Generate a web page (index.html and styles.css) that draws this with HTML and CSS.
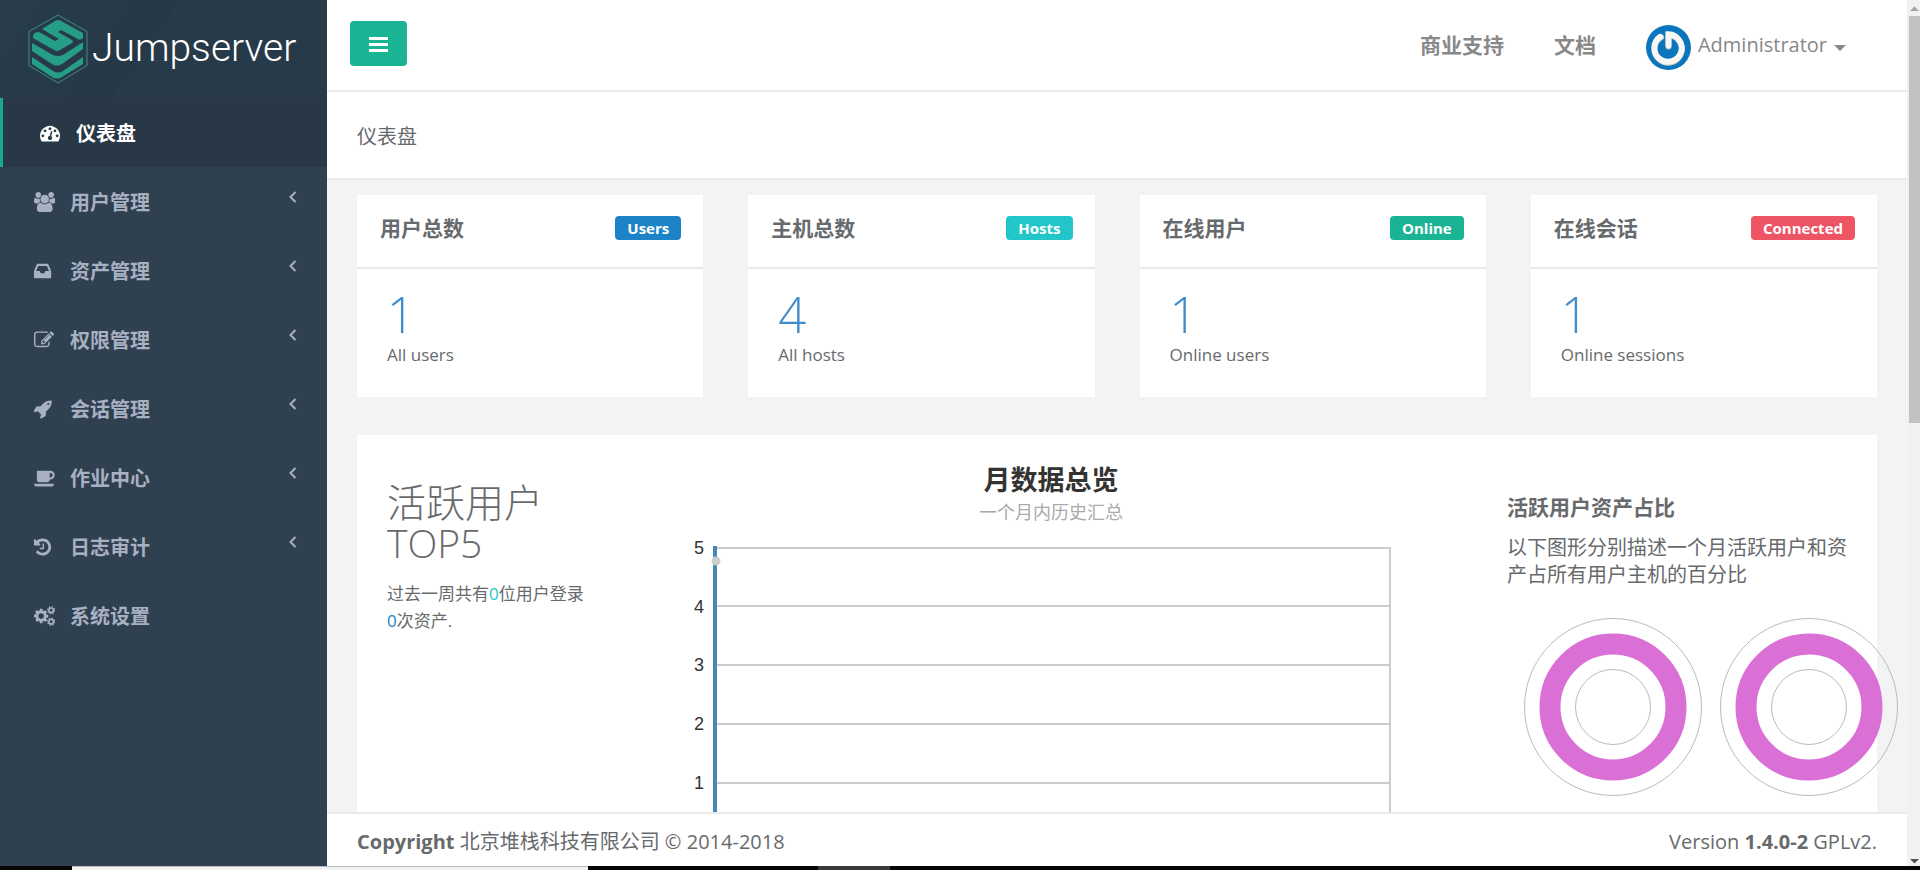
FILE: index.html
```html
<!DOCTYPE html>
<html lang="zh-CN">
<head>
<meta charset="utf-8">
<title>Jumpserver</title>
<link rel="stylesheet" href="styles.css">
</head>
<body>
<div class="app">
  <nav class="sidebar">
    <div class="brand">
      <svg class="brand-mark" viewBox="0 0 60 70" aria-hidden="true">
        <path class="hex" d="M30 1 59 17.500V51.500L30 69 1 51.500V17.500Z"/>
        <path d="M14 15 27 7Q30 5 33 7L55 19V24Q52 27 48 24L33 16 30 18 44 26Q46 28 44 29L32 36Q29 38 26 36L5 24V21Q8 16 13 19L27 27 31 25Z"/>
        <path d="M4 29 25 41Q30 43 35 41L55 28V35L34 50Q29 53 24 50L4 37Z"/>
        <path d="M4 43 25 57Q30 60 35 57L55 43V50L34 63Q29 66 24 63L4 50Z"/>
      </svg>
      <span class="brand-name">Jumpserver</span>
    </div>
    <ul class="menu">
      <li class="active"><a href="#"><span class="icon"><svg viewBox="0 0 1792 1792"><path d="M384 1152q0-53-37.500-90.500t-90.500-37.500-90.500 37.500-37.500 90.500 37.500 90.500 90.500 37.500 90.500-37.500 37.500-90.500zm192-448q0-53-37.500-90.500t-90.500-37.500-90.500 37.500-37.500 90.500 37.500 90.500 90.500 37.500 90.500-37.500 37.500-90.500zm428 481l101-382q6-26-7.500-48.500t-38.500-29.500-48 6.500-30 39.500l-101 382q-60 5-107 43.500t-63 98.500q-20 77 20 146t117 89 146-20 89-117q16-60-6-117t-72-91zm660-33q0-53-37.500-90.500t-90.500-37.500-90.500 37.500-37.500 90.500 37.500 90.500 90.500 37.500 90.500-37.500 37.500-90.500zm-640-640q0-53-37.500-90.500t-90.500-37.500-90.500 37.500-37.500 90.500 37.500 90.500 90.500 37.500 90.500-37.500 37.500-90.500zm448 192q0-53-37.500-90.500t-90.500-37.500-90.500 37.500-37.500 90.500 37.500 90.500 90.500 37.500 90.500-37.500 37.500-90.500zm320 448q0 261-141 483-19 29-54 29h-1402q-35 0-54-29-141-221-141-483 0-182 71-348t191-286 286-191 348-71 348 71 286 191 191 286 71 348z"/></svg></span><span>仪表盘</span></a></li>
      <li><a href="#"><span class="icon"><svg viewBox="-64 0 1920 1792"><path d="M529 896q-162 5-265 128h-134q-82 0-138-40.500t-56-118.500q0-353 124-353 6 0 43.500 21t97.500 42.500 119 21.500q67 0 133-23-5 37-5 66 0 139 81 256zm1071 637q0 120-73 189.500t-194 69.500h-874q-121 0-194-69.500t-73-189.500q0-53 3.500-103.500t14-109 26.500-108.500 43-97.500 62-81 85.500-53.500 111.500-20q10 0 43 21.500t73 48 107 48 135 21.500 135-21.500 107-48 73-48 43-21.500q61 0 111.500 20t85.500 53.500 62 81 43 97.500 26.500 108.500 14 109 3.500 103.500zm-1024-1277q0 106-75 181t-181 75-181-75-75-181 75-181 181-75 181 75 75 181zm704 384q0 159-112.500 271.500t-271.500 112.500-271.500-112.500-112.500-271.500 112.500-271.500 271.500-112.500 271.500 112.500 112.500 271.500zm576 225q0 78-56 118.500t-138 40.500h-134q-103-123-265-128 81-117 81-256 0-29-5-66 66 23 133 23 59 0 119-21.500t97.500-42.500 43.500-21q124 0 124 353zm-128-609q0 106-75 181t-181 75-181-75-75-181 75-181 181-75 181 75 75 181z"/></svg></span><span>用户管理</span><svg class="angle" viewBox="0 0 8 12"><path d="M6.500 1 1.500 6l5 5"/></svg></a></li>
      <li><a href="#"><span class="icon"><svg viewBox="0 0 1792 1792"><path fill-rule="evenodd" d="M300 256H1236Q1270 256 1284 288L1520 860Q1536 900 1536 940V1480Q1536 1536 1480 1536H56Q0 1536 0 1480V940Q0 900 16 860L252 288Q266 256 300 256ZM378 448 196 896H512L608 1088H928L1024 896H1340L1158 448Z"/></svg></span><span>资产管理</span><svg class="angle" viewBox="0 0 8 12"><path d="M6.500 1 1.500 6l5 5"/></svg></a></li>
      <li><a href="#"><span class="icon"><svg viewBox="0 0 1792 1792"><path d="M888 1184l116-116-152-152-116 116v56h96v96h56zm440-720q-16-16-33 1l-350 350q-17 17-1 33t33-1l350-350q17-17 1-33zm80 594v190q0 119-84.500 203.500t-203.500 84.500h-832q-119 0-203.500-84.500t-84.500-203.500v-832q0-119 84.500-203.500t203.500-84.500h832q63 0 117 25 15 7 18 23 3 17-9 29l-49 49q-14 14-32 8-23-6-45-6h-832q-66 0-113 47t-47 113v832q0 66 47 113t113 47h832q66 0 113-47t47-113v-126q0-13 9-22l64-64q15-15 35-7t20 29zm-96-738l288 288-672 672h-288v-288zm444 132l-92 92-288-288 92-92q28-28 68-28t68 28l152 152q28 28 28 68t-28 68z"/></svg></span><span>权限管理</span><svg class="angle" viewBox="0 0 8 12"><path d="M6.500 1 1.500 6l5 5"/></svg></a></li>
      <li><a href="#"><span class="icon"><svg viewBox="64 0 1792 1792"><path d="M1440 448q0-40-28-68t-68-28-68 28-28 68 28 68 68 28 68-28 28-68zm224-288q0 249-75.500 430.500t-253.500 360.500q-81 80-195 176l-20 379q-2 16-16 26l-384 224q-7 4-16 4-12 0-23-9l-64-64q-13-14-8-32l85-276-281-281-276 85q-3 1-9 1-14 0-23-9l-64-64q-17-19-5-39l224-384q10-14 26-16l379-20q96-114 176-195 188-187 358-258t431-71q14 0 24 9.500t10 22.500z"/></svg></span><span>会话管理</span><svg class="angle" viewBox="0 0 8 12"><path d="M6.500 1 1.500 6l5 5"/></svg></a></li>
      <li><a href="#"><span class="icon"><svg viewBox="0 0 1920 1792"><path d="M1664 640q0-80-56-136t-136-56h-64v384h64q80 0 136-56t56-136zm-1664 768h1792q0 106-75 181t-181 75h-1280q-106 0-181-75t-75-181zm1856-768q0 159-112.500 271.500t-271.500 112.500h-64v32q0 92-66 158t-158 66h-704q-92 0-158-66t-66-158v-736q0-26 19-45t45-19h1152q159 0 271.500 112.500t112.500 271.500z"/></svg></span><span>作业中心</span><svg class="angle" viewBox="0 0 8 12"><path d="M6.500 1 1.500 6l5 5"/></svg></a></li>
      <li><a href="#"><span class="icon"><svg viewBox="128 0 1792 1792"><path d="M1664 896q0 156-61 298t-164 245-245 164-298 61q-172 0-327-72.500t-264-204.500q-7-10-6.500-22.500t8.500-20.500l137-138q10-9 25-9 16 2 23 12 73 95 179 147t225 52q104 0 198.500-40.500t163.500-109.500 109.500-163.500 40.500-198.500-40.500-198.500-109.500-163.500-163.500-109.500-198.500-40.500q-98 0-188 35.500t-160 101.500l137 138q31 30 14 69-17 40-59 40h-448q-26 0-45-19t-19-45v-448q0-42 40-59 39-17 69 14l130 129q107-101 244.500-156.500t284.500-55.500q156 0 298 61t245 164 164 245 61 298zm-640-288v448q0 14-9 23t-23 9h-320q-14 0-23-9t-9-23v-64q0-14 9-23t23-9h224v-352q0-14 9-23t23-9h64q14 0 23 9t9 23z"/></svg></span><span>日志审计</span><svg class="angle" viewBox="0 0 8 12"><path d="M6.500 1 1.500 6l5 5"/></svg></a></li>
      <li><a href="#"><span class="icon"><svg viewBox="0 0 1920 1792"><path d="M896 896q0-106-75-181t-181-75-181 75-75 181 75 181 181 75 181-75 75-181zm384-91v185q0 10-7 19.500t-16 10.500l-155 24q-11 35-32 76 34 48 90 115 7 11 7 20 0 12-7 19-23 30-82.500 89.500t-78.500 59.500q-11 0-21-7l-115-90q-37 19-77 31-11 108-23 155-7 24-30 24h-186q-11 0-20-7.500t-10-17.500l-23-153q-34-10-75-31l-118 89q-7 7-20 7-11 0-21-8-144-133-144-160 0-9 7-19 10-14 41-53t47-61q-23-44-35-82l-152-24q-10-1-17-9.500t-7-19.500v-185q0-10 7-19.500t16-10.500l155-24q11-35 32-76-34-48-90-115-7-11-7-20 0-12 7-20 22-30 82-89t79-59q11 0 21 7l115 90q34-18 77-32 11-108 23-154 7-24 30-24h186q11 0 20 7.500t10 17.500l23 153q34 10 75 31l118-89q8-7 20-7 11 0 21 8 144 133 144 160 0 8-7 19-12 16-42 54t-45 60q23 48 34 82l152 23q10 2 17 10.500t7 19.500z"/><g class="gear"><circle cx="1536" cy="384" r="205"/><circle class="teeth" cx="1536" cy="384" r="320"/><circle cx="1536" cy="1408" r="205"/><circle class="teeth" cx="1536" cy="1408" r="320"/></g></svg></span><span>系统设置</span></a></li>
    </ul>
  </nav>

  <div class="main">
    <header class="topbar">
      <button class="toggle" type="button" aria-label="菜单"><svg viewBox="0 0 19 16"><path d="M0 0h19v3H0zM0 6h19v3H0zM0 12h19v3H0z"/></svg></button>
      <div class="top-links">
        <a class="support" href="#">商业支持</a>
        <a class="docs" href="#">文档</a>
        <a class="user" href="#">
          <svg class="avatar" viewBox="0 0 46 46" aria-hidden="true"><circle class="disc" cx="23" cy="23" r="23"/><g class="shade"><path d="M15.500 12.500A14 14 0 1 0 23 10.500V22"/></g><path d="M14.500 12A14 14 0 1 0 23 9.500V21"/></svg>
          <span>Administrator</span><i class="caret"></i>
        </a>
      </div>
    </header>
    <div class="heading">仪表盘</div>

    <main class="content">
      <section class="cards">
        <article class="card"><header><h5>用户总数</h5><span class="label blue">Users</span></header><div class="card-body"><h1><a href="#">1</a></h1><small>All users</small></div></article>
        <article class="card"><header><h5>主机总数</h5><span class="label cyan">Hosts</span></header><div class="card-body"><h1><a href="#">4</a></h1><small>All hosts</small></div></article>
        <article class="card"><header><h5>在线用户</h5><span class="label green">Online</span></header><div class="card-body"><h1><a href="#">1</a></h1><small>Online users</small></div></article>
        <article class="card"><header><h5>在线会话</h5><span class="label red">Connected</span></header><div class="card-body"><h1><a href="#">1</a></h1><small>Online sessions</small></div></article>
      </section>

      <section class="panel">
        <div class="top5">
          <h2>活跃用户TOP5</h2>
          <p>过去一周共有<span class="c-cyan">0</span>位用户登录<span class="c-blue">0</span>次资产.</p>
        </div>
        <div class="chart">
          <h3>月数据总览</h3>
          <p>一个月内历史汇总</p>
          <svg class="plot" viewBox="0 0 720 330" role="img" aria-label="月数据总览">
            <g class="grid"><path d="M34 13H709M34 71H709M34 130H709M34 189H709M34 248H709M34 307H709M708 13V307"/></g>
            <path class="axis" d="M33 11V309"/>
            <circle class="dot" cx="34" cy="26" r="4.500"/>
            <g class="ticks"><text x="22" y="19">5</text><text x="22" y="78">4</text><text x="22" y="136">3</text><text x="22" y="195">2</text><text x="22" y="254">1</text></g>
          </svg>
        </div>
        <div class="share">
          <h4>活跃用户资产占比</h4>
          <p>以下图形分别描述一个月活跃用户和资产占所有用户主机的百分比</p>
          <div class="rings">
            <svg viewBox="0 0 180 180"><circle cx="90" cy="90" r="88.500"/><circle class="band" cx="90" cy="90" r="63"/><circle cx="90" cy="90" r="37.500"/></svg>
            <svg viewBox="0 0 180 180"><circle cx="90" cy="90" r="88.500"/><circle class="band" cx="90" cy="90" r="63"/><circle cx="90" cy="90" r="37.500"/></svg>
          </div>
        </div>
      </section>
    </main>

    <footer class="footer">
      <div><strong>Copyright</strong> 北京堆栈科技有限公司 © 2014-2018</div>
      <div>Version <strong>1.4.0-2</strong> GPLv2.</div>
    </footer>
  </div>

  <div class="scroll" aria-hidden="true">
    <svg viewBox="0 0 11 16"><path d="M1 11h9L5.500 6.500z"/></svg>
    <div class="thumb"></div>
    <svg class="down" viewBox="0 0 11 10"><path d="M1 3h9L5.500 7.500z"/></svg>
  </div>
</div>
<div class="taskbar" aria-hidden="true"><i class="task-search"></i><i class="task-open"></i></div>
</body>
</html>
```
FILE: styles.css
```css
* { box-sizing: border-box; }
body {
  margin: 0;
  height: 100vh;
  display: flex;
  flex-direction: column;
  overflow: hidden;
  background: #2f4050;
  color: #676a6c;
  font-family: "Open Sans", "Noto Sans CJK SC", sans-serif;
  font-size: 20px;
  line-height: 28px;
}
a { color: inherit; text-decoration: none; }
h1, h2, h3, h4, h5, p, ul { margin: 0; padding: 0; }
svg { display: block; }

.app { flex: 1; min-height: 0; display: flex; }

.sidebar { flex: 0 0 327px; background: #2f4050; color: #a7b1c2; }
.brand {
  height: 98px;
  padding: 14px 0 14px 28px;
  display: flex;
  gap: 4px;
  background: linear-gradient(125deg, #283c4c 0, #263847 45%, #273a4a 46%, #263a4a 100%);
}
.brand-mark { width: 60px; height: 70px; fill: #259e85; }
.brand-mark .hex { fill: none; stroke: #3c8f86; }
.brand-name { color: #fff; font-family: Roboto, sans-serif; font-size: 39px; font-weight: 300; line-height: 68px; }

.menu { list-style: none; }
.menu a {
  height: 69px;
  padding: 2px 30px 0 34px;
  display: flex;
  align-items: center;
  font-weight: 700;
}
.menu .active a { padding-left: 37px; border-left: 3px solid #19aa8d; background: #293846; color: #fff; }
.icon { flex: 0 0 36px; padding-bottom: 2px; }
.icon svg { height: 20px; fill: currentColor; }
.gear { fill: none; stroke: currentColor; stroke-width: 150; }
.gear .teeth { stroke-width: 110; stroke-dasharray: 126 125; }
.angle { width: 8px; height: 12px; margin: 0 0 11px auto; fill: none; stroke: currentColor; stroke-width: 2; }

.main { flex: 1; min-width: 0; display: flex; flex-direction: column; background: #f3f3f4; }
.topbar {
  flex: none;
  height: 92px;
  padding: 0 61px 0 23px;
  display: flex;
  align-items: center;
  justify-content: space-between;
  background: #fff;
  border-bottom: 2px solid #e7eaec;
}
.toggle {
  width: 57px;
  height: 45px;
  margin-bottom: 4px;
  padding: 3px 19px 0;
  border: 0;
  border-radius: 4px;
  background: #1ab394;
}
.toggle svg { width: 19px; height: 16px; fill: #fff; }
.top-links { display: flex; align-items: center; color: #888; }
.support, .docs { font-size: 21px; font-weight: 700; margin-right: 50px; }
.user { display: flex; align-items: center; gap: 7px; }
.avatar { width: 45px; height: 45px; margin-top: 4px; fill: none; stroke: #f7f7f5; stroke-width: 6; stroke-linecap: round; }
.avatar .disc { fill: #0a76bd; stroke: none; }
.avatar .shade { stroke: #ccc9c4; }
.caret { margin-top: 6px; border: 6px solid transparent; border-top-color: #888; border-bottom: 0; }

.heading {
  flex: none;
  height: 88px;
  padding: 31px 30px;
  background: #fff;
  border-bottom: 2px solid #e7eaec;
}

.content { flex: 1; min-height: 0; overflow: hidden; padding: 15px 30px 0; }
.cards { display: grid; grid-template-columns: repeat(4, 1fr); gap: 45px; margin-bottom: 38px; }
.card { background: #fff; }
.card > header {
  height: 74px;
  padding: 21px 22px 0 23px;
  display: flex;
  align-items: flex-start;
  justify-content: space-between;
  border-bottom: 2px solid #e7eaec;
}
.card h5 { font-size: 21px; line-height: 24px; }
.label { padding: 0 12px; border-radius: 4px; color: #fff; font-size: 15px; font-weight: 700; line-height: 24px; }
.blue { background: #1c84c6; }
.cyan { background: #23c6c8; }
.green { background: #1ab394; }
.red { background: #ed5565; }
.card-body { height: 128px; padding: 20px 30px; }
.card-body h1 { color: #428bca; font-size: 49px; font-weight: 300; line-height: 50px; }
.card-body small { display: block; font-size: 17px; line-height: 32px; }

.panel { height: 520px; padding: 26px 30px; display: flex; background: #fff; }
.top5 { flex: 0 0 200px; margin-right: 95px; padding-top: 20px; }
.top5 h2 { font-size: 39px; font-weight: 300; line-height: 41px; margin-bottom: 17px; }
.top5 p { font-size: 17px; line-height: 27px; }
.c-cyan { color: #23c6c8; }
.c-blue { color: #1c84c6; }
.chart { flex: 1; min-width: 0; text-align: center; }
.chart h3 { padding-left: 18px; color: #333; font-size: 27px; line-height: 37px; }
.chart p { padding-left: 18px; color: #aaa; font-size: 18px; line-height: 28px; margin-bottom: 9px; }
.plot { width: 100%; }
.grid { fill: none; stroke: #ccc; stroke-width: 2; }
.axis { stroke: #48b; stroke-width: 4; }
.dot { fill: #ccc; }
.ticks { fill: #333; font-family: "Liberation Sans", sans-serif; font-size: 18px; text-anchor: end; }
.share { flex: 0 0 340px; min-width: 0; margin-left: 105px; padding-top: 32px; }
.share h4 { font-size: 21px; line-height: 28px; margin-bottom: 13px; }
.share p { line-height: 27px; }
.rings { display: flex; gap: 16px; margin: 29px 0 0 16px; }
.rings svg { flex: 0 0 180px; height: 180px; fill: none; stroke: #bbb; stroke-width: 1; }
.rings .band { stroke: #da70d6; stroke-width: 21; }

.footer {
  flex: none;
  padding: 14px 30px 10px;
  display: flex;
  justify-content: space-between;
  background: #fff;
  border-top: 2px solid #e7eaec;
}

.scroll { flex: 0 0 13px; display: flex; flex-direction: column; background: #f1f1f1; padding-left: 2px; }
.scroll svg { fill: #a3a3a3; width: 11px; height: 16px; }
.scroll .down { height: 10px; margin-top: auto; fill: #505050; }
.thumb { height: 47%; background: #c1c1c1; }

.taskbar { flex: 0 0 4px; padding-left: 72px; display: flex; gap: 230px; background: #050606; }
.task-search { width: 516px; background: #f2f2f2; border-top: 1px solid #bbb; }
.task-open { width: 72px; background: #3a3a3a; }
```
